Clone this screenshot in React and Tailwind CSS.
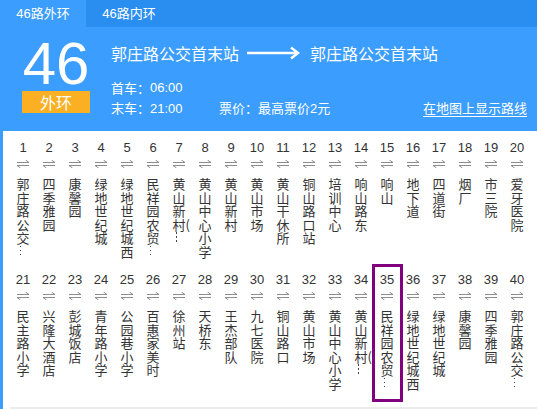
import React from "react";

const FONT = { fontFamily: '"Liberation Sans", "Noto Sans CJK SC", sans-serif' };
const CJK = { fontFamily: '"Noto Sans CJK SC", "Liberation Sans", sans-serif' };

const rowOne = [
  "郭庄路公交…", "四季雅园", "康馨园", "绿地世纪城", "绿地世纪城西",
  "民祥园农贸…", "黄山新村(…", "黄山中心小学", "黄山新村", "黄山市场",
  "黄山干休所", "铜山路口站", "培训中心", "响山路东", "响山",
  "地下道", "四道街", "烟厂", "市三院", "爱牙医院",
];

const rowTwo = [
  "民主路小学", "兴隆大酒店", "彭城饭店", "青年路小学", "公园巷小学",
  "百惠家美时", "徐州站", "天桥东", "王杰部队", "九七医院",
  "铜山路口", "黄山市场", "黄山中心小学", "黄山新村(…", "民祥园农贸…",
  "绿地世纪城西", "绿地世纪城", "康馨园", "四季雅园", "郭庄路公交…",
];

// Split a stop name into stacked lines; "(" hangs beside the previous glyph.
function toLines(name) {
  const lines = [];
  for (const ch of name) {
    if (ch === "(" && lines.length) lines[lines.length - 1] += ch;
    else lines.push(ch);
  }
  return lines;
}

function BothWays() {
  return (
    <svg width="12" height="8" viewBox="0 0 12 8" className="block">
      <path d="M0 2.5H12L8.5 0" fill="none" stroke="#8c8c8c" strokeWidth="1" />
      <path d="M12 5.5H0L3.5 8" fill="none" stroke="#8c8c8c" strokeWidth="1" />
    </svg>
  );
}

function VDots() {
  return (
    <div className="flex flex-col gap-[2.5px] pl-[3px] pt-[1px]">
      <div className="w-[1.5px] h-[1.5px] bg-[#444]" />
      <div className="w-[1.5px] h-[1.5px] bg-[#444]" />
      <div className="w-[1.5px] h-[1.5px] bg-[#444]" />
    </div>
  );
}

function Stop({ index, name, current }) {
  return (
    <div className="relative w-[26px] flex flex-col items-center">
      {current && (
        <div className="absolute left-[-2px] right-[-3px] top-[-8px] h-[138px] border-[3px] border-[#800080]" />
      )}
      <div className="text-[13px] leading-[15px] text-[#333]" style={FONT}>
        {index}
      </div>
      <div className="mt-[5px]">
        <BothWays />
      </div>
      <div className="mt-[9px] w-[13px] text-[13px] leading-[13.5px] text-[#333] whitespace-nowrap" style={CJK}>
        {toLines(name).map((l, i) =>
          l === "…" ? <VDots key={i} /> : <div key={i}>{l}</div>
        )}
      </div>
    </div>
  );
}

function StopRow({ names, start, height, current }) {
  return (
    <div className={`flex ${height}`}>
      {names.map((n, i) => (
        <Stop key={i} index={start + i} name={n} current={start + i === current} />
      ))}
    </div>
  );
}

export default function App() {
  return (
    <div className="w-[537px] h-[409px] overflow-hidden bg-white" style={CJK}>
      {/* direction tabs */}
      <div className="flex h-[27px] bg-[#2a8df0] text-white text-[13px]">
        <div className="w-[86px] bg-[#3b9dfe] flex items-center justify-center" style={FONT}>
          46路外环
        </div>
        <div className="w-[86px] flex items-center justify-center" style={FONT}>
          46路内环
        </div>
      </div>

      {/* line summary */}
      <div className="h-[104px] bg-[#3b9dfe] flex text-white">
        <div className="ml-[22px] w-[68px] pt-[12px] flex flex-col items-center">
          <div className="text-[60px] leading-[50px] text-center" style={{ fontFamily: '"Liberation Sans", sans-serif' }}>
            46
          </div>
          <div className="mt-[2px] w-[68px] h-[22px] bg-[#fbb023] flex items-center justify-center text-[16px]" style={CJK}>
            外环
          </div>
        </div>
        <div className="ml-[21px] flex-1 pt-[16px] pr-[10px]">
          <div className="flex items-center h-[20px] text-[16px]">
            <span>郭庄路公交首末站</span>
            <svg width="53" height="14" viewBox="0 0 53 14" className="ml-[8px] mr-[10px]">
              <path d="M0 7H50" stroke="#fff" strokeWidth="2.5" />
              <path d="M44 1.5L51 7L44 12.5" fill="none" stroke="#fff" strokeWidth="2.5" />
            </svg>
            <span>郭庄路公交首末站</span>
          </div>
          <div className="mt-[15px] h-[20px] flex items-center text-[13px]">
            <span>首车：</span>
            <span style={FONT}>06:00</span>
          </div>
          <div className="h-[20px] flex items-center text-[13px]">
            <div className="w-[108px]">
              <span>末车：</span>
              <span style={FONT}>21:00</span>
            </div>
            <div>
              票价：最高票价<span style={FONT}>2</span>元
            </div>
            <div className="ml-auto underline underline-offset-[3px]">在地图上显示路线</div>
          </div>
        </div>
      </div>

      {/* stops */}
      <div className="border-l-[3px] border-[#3b9dfe] h-[278px] flex flex-col">
        <div className="pl-[7px] pt-[9px]">
          <StopRow names={rowOne} start={1} height="h-[132px]" current={35} />
          <StopRow names={rowTwo} start={21} height="h-[135px]" current={35} />
        </div>
        <div className="ml-[7px] h-[3px] bg-[#ececec]" />
      </div>
    </div>
  );
}
